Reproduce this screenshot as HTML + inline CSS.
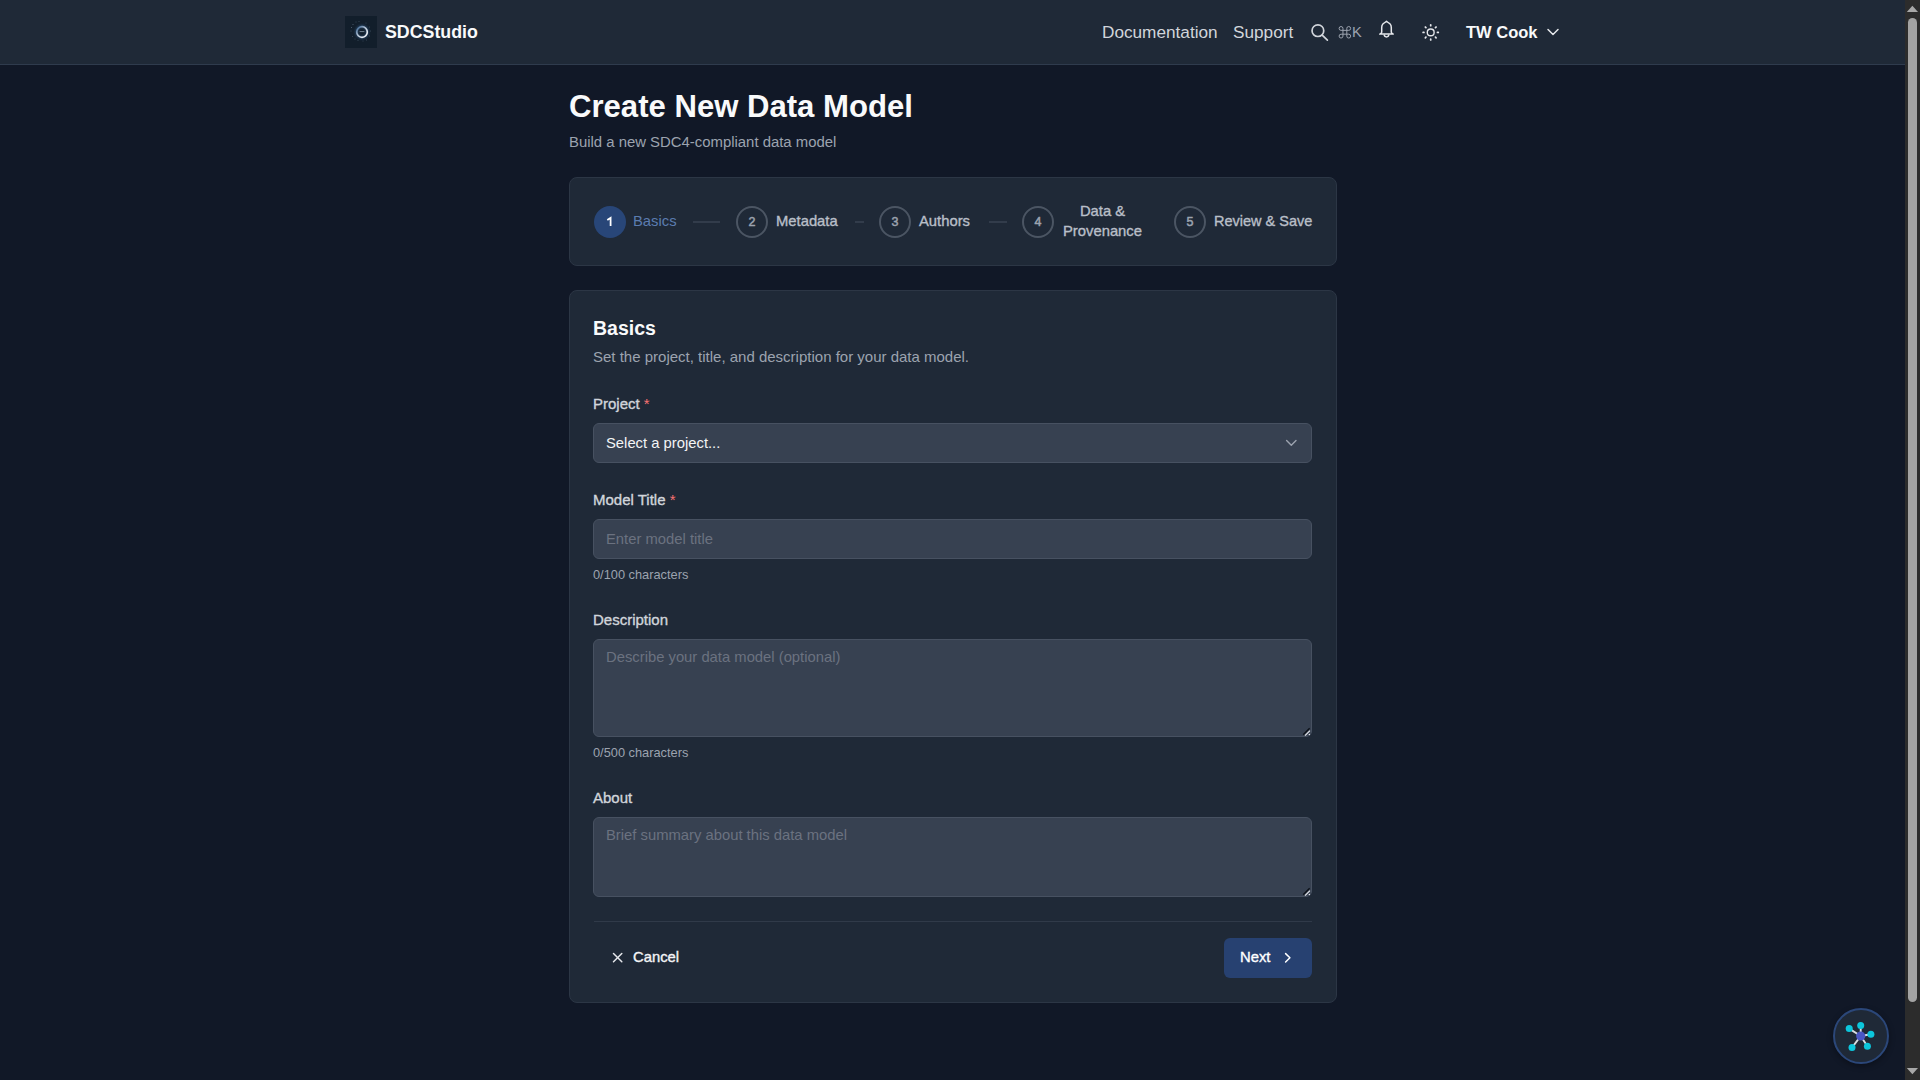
<!DOCTYPE html>
<html>
<head>
<meta charset="utf-8">
<style>
html,body{margin:0;padding:0;width:1920px;height:1080px;overflow:hidden;background:#111827;}
body{position:relative;font-family:"Liberation Sans",sans-serif;-webkit-font-smoothing:antialiased;}
.a{position:absolute;}
.t{position:absolute;white-space:nowrap;line-height:20px;}
#hdr{left:0;top:0;width:1905px;height:64px;background:#1f2937;border-bottom:1px solid #2f3b4d;}
.card{position:absolute;background:#1f2937;border:1px solid #2c3645;border-radius:8px;box-sizing:border-box;}
.inp{position:absolute;background:#374151;border:1px solid #475161;border-radius:6px;box-sizing:border-box;}
.circ{position:absolute;width:32px;height:32px;border-radius:50%;box-sizing:border-box;border:2px solid #4b5563;color:#9ca3af;font-size:12.5px;line-height:28px;text-align:center;-webkit-text-stroke:0.5px currentColor;}
.conn{position:absolute;height:2px;background:#374151;top:220.6px;transform:scaleY(0.8);}
.lbl{color:#d1d5db;font-size:15px;-webkit-text-stroke:0.35px #d1d5db;}
.m{-webkit-text-stroke:0.35px currentColor;}
.req{-webkit-text-stroke:0;}
.req{color:#f87171;}
.ph{color:#6b7280;font-size:14.8px;}
.cnt{color:#9ca3af;font-size:12.8px;}
</style>
</head>
<body>
<!-- header -->
<div id="hdr" class="a"></div>
<div class="a" style="left:345px;top:16px;width:32px;height:32px;background:#121e2b;"></div>
<div class="t" style="left:385px;top:22px;font-size:17.8px;font-weight:bold;color:#f9fafb;">SDCStudio</div>
<div class="t" style="left:1102px;top:22px;font-size:17.2px;color:#d1d5db;">Documentation</div>
<div class="t" style="left:1233px;top:22px;font-size:17.2px;color:#d1d5db;">Support</div>
<div class="t" style="left:1466px;top:22px;font-size:16.5px;font-weight:bold;color:#f9fafb;">TW Cook</div>

<!-- title -->
<div class="t" style="left:569px;top:89px;font-size:31.1px;line-height:36px;font-weight:bold;color:#f9fafb;">Create New Data Model</div>
<div class="t" style="left:569px;top:132px;font-size:14.9px;color:#9ca3af;">Build a new SDC4-compliant data model</div>

<!-- stepper -->
<div class="card" style="left:569px;top:177px;width:768px;height:89px;"></div>
<div class="circ" style="left:594px;top:206px;background:#284678;border:none;color:#fff;line-height:32px;font-weight:bold;-webkit-text-stroke:0;"></div>
<div class="t" style="left:633px;top:211px;font-size:14.8px;color:#5b7cb0;">Basics</div>
<div class="conn" style="left:693px;width:27px;"></div>
<div class="circ" style="left:736px;top:206px;">2</div>
<div class="t" style="left:776px;top:211px;-webkit-text-stroke:0.35px currentColor;font-size:14.8px;color:#b9bfc8;">Metadata</div>
<div class="conn" style="left:855px;width:9px;"></div>
<div class="circ" style="left:879px;top:206px;">3</div>
<div class="t" style="left:919px;top:211px;-webkit-text-stroke:0.35px currentColor;font-size:14.8px;color:#b9bfc8;">Authors</div>
<div class="conn" style="left:989px;width:18px;"></div>
<div class="circ" style="left:1022px;top:206px;">4</div>
<div class="t" style="left:1062px;top:201px;width:81px;text-align:center;-webkit-text-stroke:0.35px currentColor;font-size:14.8px;color:#b9bfc8;white-space:normal;">Data &amp;<br>Provenance</div>
<div class="circ" style="left:1174px;top:206px;">5</div>
<div class="t" style="left:1214px;top:211px;-webkit-text-stroke:0.35px currentColor;font-size:14.5px;color:#b9bfc8;">Review &amp; Save</div>

<!-- form card -->
<div class="card" style="left:569px;top:290px;width:768px;height:713px;"></div>
<div class="t" style="left:593px;top:314px;font-size:19.5px;line-height:28px;font-weight:bold;color:#f9fafb;">Basics</div>
<div class="t" style="left:593px;top:347px;font-size:15px;color:#9ca3af;">Set the project, title, and description for your data model.</div>

<div class="t lbl" style="left:593px;top:394px;">Project <span class="req">*</span></div>
<div class="inp" style="left:593px;top:423px;width:719px;height:40px;"></div>
<div class="t" style="left:606px;top:433px;font-size:14.8px;color:#f3f4f6;">Select a project...</div>

<div class="t lbl" style="left:593px;top:490px;">Model Title <span class="req">*</span></div>
<div class="inp" style="left:593px;top:519px;width:719px;height:40px;"></div>
<div class="t ph" style="left:606px;top:529px;">Enter model title</div>
<div class="t cnt" style="left:593px;top:567px;line-height:16px;">0/100 characters</div>

<div class="t lbl" style="left:593px;top:610px;">Description</div>
<div class="inp" style="left:593px;top:639px;width:719px;height:98px;"></div>
<div class="t ph" style="left:606px;top:647px;">Describe your data model (optional)</div>
<div class="t cnt" style="left:593px;top:745px;line-height:16px;">0/500 characters</div>

<div class="t lbl" style="left:593px;top:788px;">About</div>
<div class="inp" style="left:593px;top:817px;width:719px;height:80px;"></div>
<div class="t ph" style="left:606px;top:825px;">Brief summary about this data model</div>

<div class="a" style="left:594px;top:921px;width:718px;height:1px;background:#303a49;"></div>
<div class="t" style="left:633px;top:947px;-webkit-text-stroke:0.35px currentColor;font-size:14.8px;color:#f3f4f6;">Cancel</div>
<div class="a" style="left:1224px;top:938px;width:88px;height:40px;background:#274171;border-radius:6px;"></div>
<div class="t" style="left:1240px;top:947px;-webkit-text-stroke:0.35px currentColor;font-size:14.8px;color:#fff;">Next</div>

<!-- icons overlay -->
<svg class="a" style="left:0;top:0;" width="1920" height="1080" viewBox="0 0 1920 1080" fill="none">
  <defs>
    <radialGradient id="lg" cx="0.5" cy="0.5" r="0.5">
      <stop offset="0.55" stop-color="#121e2b"/>
      <stop offset="0.7" stop-color="#e9eef5"/>
      <stop offset="0.85" stop-color="#6d87a6"/>
      <stop offset="1" stop-color="#121e2b" stop-opacity="0"/>
    </radialGradient>
    <linearGradient id="lr" x1="0" y1="0" x2="1" y2="1"><stop offset="0" stop-color="#2f5b8a"/><stop offset="0.45" stop-color="#b9c7d8"/><stop offset="1" stop-color="#ffffff"/></linearGradient>
    <filter id="fl" x="-50%" y="-50%" width="200%" height="200%"><feGaussianBlur stdDeviation="1"/></filter>
    <filter id="fs" x="-50%" y="-50%" width="200%" height="200%"><feGaussianBlur stdDeviation="3"/></filter>
  </defs>
  <!-- logo -->
  <circle cx="362" cy="32" r="5.4" stroke="#3d6a9a" stroke-width="3" opacity="0.5" filter="url(#fl)"/>
  <circle cx="362" cy="32" r="5.3" stroke="url(#lr)" stroke-width="1.7"/>
  <g fill="#8fa3bb" opacity="0.55">
    <circle cx="351.5" cy="27.5" r="0.5"/><circle cx="353" cy="24.5" r="0.5"/><circle cx="356" cy="22" r="0.45"/><circle cx="359" cy="21.5" r="0.45"/>
    <circle cx="351" cy="31" r="0.45"/><circle cx="352.5" cy="36.5" r="0.45"/><circle cx="355" cy="39" r="0.45"/><circle cx="358" cy="40.5" r="0.45"/>
    <circle cx="363" cy="41" r="0.4"/><circle cx="366.5" cy="40" r="0.45"/><circle cx="369.5" cy="36" r="0.45"/><circle cx="370.5" cy="31" r="0.45"/>
    <circle cx="369.5" cy="27" r="0.4"/><circle cx="366" cy="23" r="0.4"/>
  </g>
  <path d="M359.6 31.6h4.8" stroke="#9fb0c2" stroke-width="0.7"/>
  <!-- step 1 numeral -->
  <path d="M607.3 220L610.6 217.9V226" stroke="#ffffff" stroke-width="1.75" stroke-linejoin="miter"/>
  <!-- search -->
  <circle cx="1317.9" cy="30.65" r="5.85" stroke="#d1d5db" stroke-width="1.7"/>
  <path d="M1322.2 35.1L1327.4 40.2" stroke="#d1d5db" stroke-width="1.7" stroke-linecap="round"/>
  <!-- command symbol -->
  <path d="M15 6v12a3 3 0 1 0 3-3H6a3 3 0 1 0 3 3V6a3 3 0 1 0-3 3h12a3 3 0 1 0-3-3" transform="translate(1337.2,24.6) scale(0.64)" stroke="#9ca3af" stroke-width="1.55"/>
  <!-- bell -->
  <path d="M1386.5 21.2c-1 .9-2.6 2-3.6 2.8-1 .9-1.2 2.2-1.2 3.6v4.6c0 .8-.9 1.4-2 1.9h13.6c-1.1-.5-2-1.1-2-1.9v-4.6c0-1.4-.2-2.7-1.2-3.6-1-.8-2.6-1.9-3.6-2.8z" stroke="#e5e7eb" stroke-width="1.5" stroke-linejoin="round"/>
  <path d="M1384.2 34.6a2.3 2.3 0 0 0 4.6 0" stroke="#e5e7eb" stroke-width="1.5"/>
  <!-- sun -->
  <g stroke="#e5e7eb" stroke-width="1.67" stroke-linecap="round" transform="translate(1420.7,22.4) scale(0.8333)">
    <circle cx="12" cy="12" r="4.1"/>
    <path d="M12.00 3.90L12.00 2.90M17.73 6.27L18.43 5.57M20.10 12.00L21.10 12.00M17.73 17.73L18.43 18.43M12.00 20.10L12.00 21.10M6.27 17.73L5.57 18.43M3.90 12.00L2.90 12.00M6.27 6.27L5.57 5.57" stroke-width="2.1"/>
  </g>
  <!-- user chevron -->
  <path d="M1548 29.5l5 5 5-5" stroke="#e5e7eb" stroke-width="1.5" stroke-linecap="round" stroke-linejoin="round"/>
  <!-- select chevron -->
  <path d="M1286.6 440.6l4.7 4.7 4.7-4.7" stroke="#9ca3af" stroke-width="1.4" stroke-linecap="round" stroke-linejoin="round"/>
  <!-- resize handles -->
  <path d="M1303.2 734.6L1309.6 728.2M1303.2 894.6L1309.6 888.2" stroke="#0b0f16" stroke-width="1.3"/>
  <path d="M1305 735.6L1310 730.6M1305 895.6L1310 890.6" stroke="#e5e7eb" stroke-width="1.2"/>
  <circle cx="1309.4" cy="734.4" r="0.75" fill="#e5e7eb"/><circle cx="1309.4" cy="894.4" r="0.75" fill="#e5e7eb"/>
  <!-- cancel x -->
  <path d="M613.5 953.5l8.3 8.3M621.8 953.5l-8.3 8.3" stroke="#e5e7eb" stroke-width="1.5" stroke-linecap="round"/>
  <!-- next chevron -->
  <path d="M1285.6 953.6l4.3 4.2-4.3 4.2" stroke="#ffffff" stroke-width="1.5" stroke-linecap="round" stroke-linejoin="round"/>
  <!-- FAB -->
  <circle cx="1861" cy="1038" r="28" fill="#000" opacity="0.35" filter="url(#fs)"/>
  <circle cx="1861" cy="1036" r="27" fill="#1f2937" stroke="#2b4779" stroke-width="2"/>
  <g stroke="#d9dde3" stroke-width="1.9">
    <path d="M1860.7 1036L1860.7 1025.4M1860.7 1036L1849.2 1028.6M1860.7 1036L1870.9 1034.2M1860.7 1036L1852 1047.6M1860.7 1036L1867.4 1046.2"/>
  </g>
  <g fill="#0cc6dc">
    <circle cx="1860.7" cy="1025.4" r="3.5"/><circle cx="1849.2" cy="1028.6" r="3.5"/><circle cx="1870.9" cy="1034.2" r="3.5"/>
    <circle cx="1852" cy="1047.6" r="3.5"/><circle cx="1867.4" cy="1046.2" r="3.5"/>
  </g>
  <circle cx="1860.7" cy="1036" r="4.6" fill="#4a56c4"/>
</svg>
<div class="t" style="left:1352px;top:22px;font-size:14.6px;color:#9ca3af;">K</div>

<!-- scrollbar -->
<div class="a" style="left:1905px;top:0;width:15px;height:1080px;background:#2c2c2c;"></div>
<div class="a" style="left:1908px;top:18px;width:9px;height:984px;background:#a3a3a3;border-radius:5px;"></div>
<svg class="a" style="left:1905px;top:0;" width="15" height="1080" viewBox="0 0 15 1080">
  <path d="M1.8 12h11.2L7.4 5.8z" fill="#a8a8a8"/>
  <path d="M1.8 1068h11.2L7.4 1074.2z" fill="#a8a8a8"/>
</svg>
</body>
</html>
